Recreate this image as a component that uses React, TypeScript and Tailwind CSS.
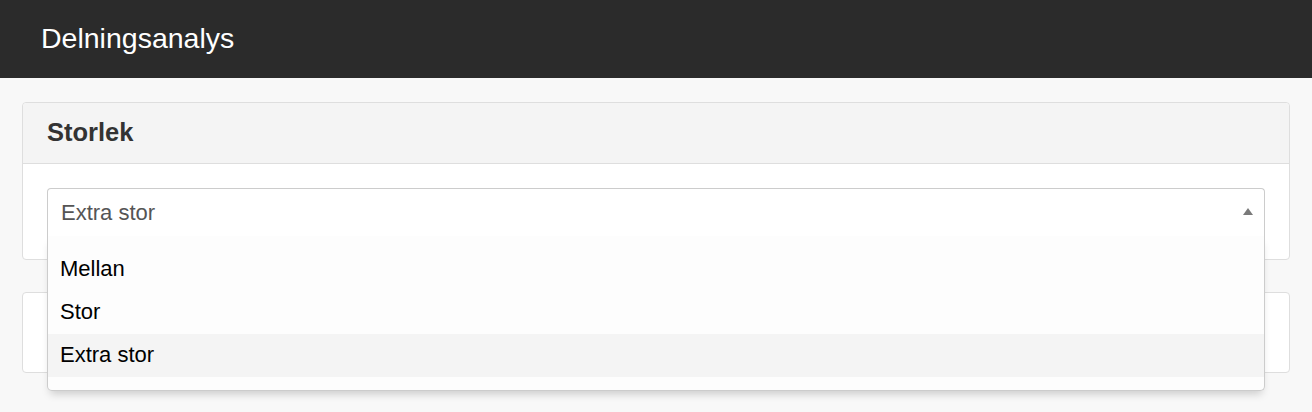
import { useState } from "react";

const OPTIONS = ["Mellan", "Stor", "Extra stor"];

export default function App() {
  const [value, setValue] = useState("Extra stor");
  const [hover, setHover] = useState("Extra stor");

  return (
    <div className="min-h-[412px] bg-[#f8f8f8] font-['Liberation_Sans',Arial,sans-serif]">
      {/* HEADER */}
      <header className="h-[78px] bg-[#2b2b2b] flex items-center px-[41px]">
        <h1 className="text-[28.5px] text-white leading-none pb-[2px]">Delningsanalys</h1>
      </header>

      <main className="px-[22px] pt-[24px] flex flex-col gap-[32px]">
        {/* STORLEK */}
        <section className="border border-[#dedede] rounded-[4px] bg-white relative z-10">
          <div className="h-[61px] bg-[#f4f4f4] border-b border-[#dedede] rounded-t-[4px] flex items-center px-[24px]">
            <h2 className="text-[25.5px] font-bold text-[#333] leading-none">Storlek</h2>
          </div>
          <div className="px-[24px] pt-[24px] pb-[23px]">
            <div className="relative">
              <div className="h-[48px] border border-b-0 border-[#cccccc] rounded-t-[4px] bg-white flex items-center justify-between pl-[13px] pr-[11px]">
                <span className="text-[22px] text-[#555] pb-[1px]">{value}</span>
                <svg width="10" height="7" viewBox="0 0 10 7" className="mb-[3px]">
                  <path d="M0 7 L5 0 L10 7 Z" fill="#7a7a7a" />
                </svg>
              </div>

              {/* DROPDOWN */}
              <ul className="absolute left-0 right-0 top-[48px] bg-[#fdfdfd] border border-t-0 border-[#cccccc] rounded-b-[5px] shadow-[0_6px_9px_-3px_rgba(0,0,0,0.18)] pt-[12px] pb-[13px]">
                {OPTIONS.map((o) => (
                  <li
                    key={o}
                    onClick={() => setValue(o)}
                    onMouseEnter={() => setHover(o)}
                    className={`h-[43px] flex items-center px-[12px] text-[22px] text-black cursor-pointer ${
                      hover === o ? "bg-[#f4f4f4]" : ""
                    }`}
                  >
                    <span className="pb-[2px]">{o}</span>
                  </li>
                ))}
              </ul>
            </div>
          </div>
        </section>

        {/* NEXT CARD */}
        <section className="h-[81px] border border-[#dedede] rounded-[4px] bg-white" />
      </main>
    </div>
  );
}
